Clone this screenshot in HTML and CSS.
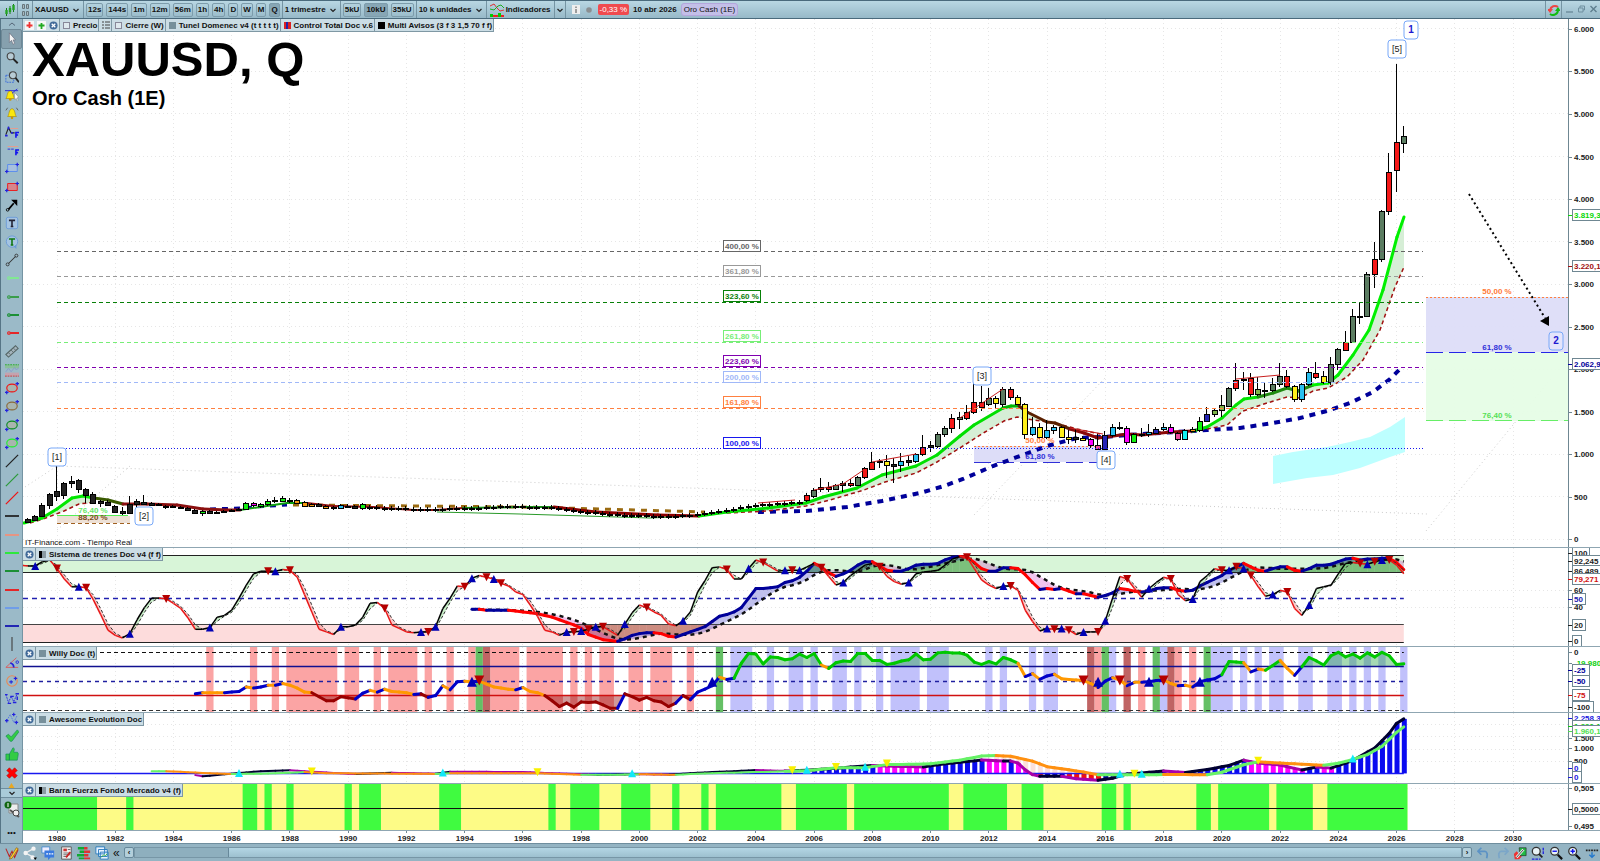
FILE: index.html
```html
<!DOCTYPE html>
<html lang="es">
  <head>
    <meta charset="UTF-8" />
    <meta name="viewport" content="width=device-width, initial-scale=1.0" />
    <title>XAUUSD, Q</title>
    <link rel="stylesheet" href="styles.css">
  </head>
  <body>
    <!-- shared shapes -->
    <svg class="defs" aria-hidden="true">
      <symbol id="chevron" viewBox="0 0 8 8"><path d="M1.500 3l2.500 2.500L6.500 3" fill="none" stroke="#222" stroke-width="1.200"/></symbol>
      <symbol id="close" viewBox="0 0 10 10"><circle cx="5" cy="5" r="4.500" fill="#416a98"/><path d="M3 3l4 4M7 3l-4 4" stroke="#fff" stroke-width="1.400"/></symbol>
      <symbol id="line" viewBox="0 0 16 16"><path d="M0 8h16" stroke="currentColor" stroke-width="2"/></symbol>
      <symbol id="diagonal" viewBox="0 0 16 16"><path d="M1 15L15 1" stroke="currentColor" stroke-width="1.500"/></symbol>
      <symbol id="ray" viewBox="0 0 16 16"><path d="M6 8h10" stroke="currentColor" stroke-width="2"/><circle cx="4.500" cy="8" r="1.500" fill="none" stroke="currentColor" stroke-width="1.200"/></symbol>
      <symbol id="ellipse" viewBox="0 0 16 16"><ellipse cx="8" cy="8" rx="6" ry="4.500" fill="#a9b5ae" stroke="currentColor" stroke-width="1.300"/><path d="M0 13h4M2 11v4M12 3h4M14 1v4" stroke="#22d" stroke-width="1.400"/></symbol>
      <symbol id="glass" viewBox="0 0 16 16"><circle cx="6.500" cy="6" r="4" fill="#b7cbd4" stroke="#444" stroke-width="1.300"/><path d="M9.500 9l5 5" stroke="#222" stroke-width="2.200"/></symbol>
    </svg>

    <header class="topbar">
      <button class="tool" aria-label="Tipo de gráfico"><svg width="10" height="12" viewBox="0 0 10 12"><path d="M1.500 4v8M5 2v8M8.500 0v8" stroke="#167a16"/><path d="M1.500 6v4M5 4v4M8.500 1v5" stroke="#24a424" stroke-width="2.400"/></svg></button>
      <button class="tool" aria-label="Vincular"><svg width="7" height="12" viewBox="0 0 7 12"><path d="M.5.5h2v4h-2zM4.500.5h2v4h-2zM.5 7.500h2v4h-2zM4.500 7.500h2v4h-2z" fill="#a9b9bf" stroke="#66767c"/></svg></button>
      <label class="dropdown"><select aria-label="Símbolo"><option>XAUUSD</option></select><svg width="8" height="8"><use href="#chevron"/></svg></label>
      <div class="group">
        <button>12s</button>
        <button>144s</button>
        <button>1m</button>
        <button>12m</button>
        <button>56m</button>
        <button>1h</button>
        <button>4h</button>
        <button>D</button>
        <button>W</button>
        <button>M</button>
        <button class="active">Q</button>
      </div>
      <label class="dropdown"><select aria-label="Periodo"><option>1 trimestre</option></select><svg width="8" height="8"><use href="#chevron"/></svg></label>
      <div class="group">
        <button>5kU</button>
        <button class="active">10kU</button>
        <button>35kU</button>
      </div>
      <label class="dropdown"><select aria-label="Unidades"><option>10 k unidades</option></select><svg width="8" height="8"><use href="#chevron"/></svg></label>
      <button class="tool indicators"><svg width="14" height="14" viewBox="0 0 14 14"><path d="M0 3l4-2 3 4 3 3 4-1" fill="none" stroke="#d33"/><path d="M0 6l4 1 4-4 3-1 3 3" fill="none" stroke="#2a2"/><path d="M0 11h3v3H0zM8 10h3v4H8z" fill="#0c0"/><path d="M3 12h5v2H3zM11 12h3v2h-3z" fill="#e22"/></svg>Indicadores</button>
      <button class="tool more" aria-label="Más indicadores"><svg width="8" height="8"><use href="#chevron"/></svg></button>
      <div class="status">
        <svg width="8" height="9" viewBox="0 0 8 9"><path d="M0 0h8v9H0z" fill="#eee"/><path d="M4 1.500v1.500M4 4v4" stroke="#888" stroke-width="1.600"/></svg>
        <svg width="6" height="6" viewBox="0 0 6 6"><circle cx="3" cy="3" r="2.800" fill="#8a8f92"/></svg>
        <span class="change">-0,33 %</span>
        <b>10 abr 2026</b>
        <span class="chip">Oro Cash (1E)</span>
      </div>
      <button class="tool refresh" aria-label="Actualizar"><svg width="12" height="12" viewBox="0 0 12 12"><path d="M10 3A5 5 0 0 0 2 6" fill="none" stroke="#e44" stroke-width="2"/><path d="M-1 5h6L2 9z" fill="#e44"/><path d="M2 10a5 5 0 0 0 8-4" fill="none" stroke="#1b1" stroke-width="2"/><path d="M7 7h6L10 3z" fill="#1b1"/></svg></button>
      <div class="window">
        <button aria-label="Minimizar"><svg width="7" height="8" viewBox="0 0 7 8"><path d="M0 7h7" stroke="#6f8f9f" stroke-width="1.500"/></svg></button>
        <button aria-label="Restaurar"><svg width="7" height="8" viewBox="0 0 7 8"><path d="M2 3V1h4.500v4H5M.5 3H5v4H.5z" fill="none" stroke="#6f8f9f"/></svg></button>
        <button aria-label="Cerrar"><svg width="7" height="8" viewBox="0 0 7 8"><path d="M.5 1l6 6M6.500 1l-6 6" stroke="#5f7f8f" stroke-width="1.400"/></svg></button>
      </div>
    </header>

    <div class="workspace">
      <nav class="sidebar" aria-label="Herramientas de dibujo">
        <button class="scroll" aria-label="Subir"><svg width="6" height="4" viewBox="0 0 6 4"><path d="M0 3.500L3 1l3 2.500" fill="none" stroke="#567"/></svg></button>
        <div class="tools">
          <button class="active" aria-label="Cursor"><svg viewBox="0 0 16 16"><path d="M5 1v11l2.500-2.500L9 14l2-1-1.700-4H12z" fill="#f4f4f4" stroke="#667" stroke-width=".7"/></svg></button>
          <button aria-label="Lupa"><svg><use href="#glass"/></svg></button>
          <button aria-label="Zoom de zona"><svg viewBox="0 0 16 16"><path d="M1 6h6M1 6v8h9v-3" fill="none" stroke="#36d" stroke-dasharray="2 1"/><circle cx="9" cy="6" r="4" fill="#b7cbd4" stroke="#444" stroke-width="1.200"/><path d="M12 9l4 5" stroke="#222" stroke-width="2"/></svg></button>
          <button aria-label="Alerta en objeto"><svg viewBox="0 0 16 16"><path d="M1 12c2-2 1-8 5-9 4 1 3 7 5 9z" fill="#fbe80c" stroke="#a80" stroke-width=".7"/><circle cx="6" cy="13" r="1.500" fill="#c90"/><path d="M0 3h15M8 6l6-5" stroke="#22d"/><path d="M11 5v8l2-1 1 3 1-1-1-3h2z" fill="#fff" stroke="#777" stroke-width=".5"/></svg></button>
          <button aria-label="Alerta"><svg viewBox="0 0 16 16"><path d="M3 12c2-2 1-8 5-9 4 1 3 7 5 9z" fill="#fbe80c" stroke="#a80" stroke-width=".7"/><circle cx="8" cy="13.500" r="1.500" fill="#c90"/><path d="M3 2L1 5M13 2l2 3" stroke="#555"/></svg></button>
          <button aria-label="Onda"><svg viewBox="0 0 16 16"><path d="M1 11l3-8 3 6h4" fill="none" stroke="#222" stroke-width="1.300"/><path d="M0 12h3M4 2v3M7 9h2" stroke="#22d" stroke-width="2"/><path d="M6 4h9" stroke="#e98"/><path d="M12.500 14.500V8.500H16M12.500 11.500H15" fill="none" stroke="#11e" stroke-width="1.800"/></svg></button>
          <button aria-label="Fibonacci"><svg viewBox="0 0 16 16"><path d="M3 4h12" stroke="#e98"/><path d="M3 7h8" stroke="#22d" stroke-dasharray="3 1"/><path d="M12.500 14V8H16M12.500 11H15" fill="none" stroke="#11e" stroke-width="1.800"/></svg></button>
          <button aria-label="Rectángulo azul"><svg viewBox="0 0 16 16"><path d="M3 4h11v8H3z" fill="#a8c0dd" stroke="#58e"/><path d="M0 12h4M2 10v4M12 4h4M14 2v4" stroke="#22d" stroke-width="1.400"/></svg></button>
          <button aria-label="Rectángulo rojo"><svg viewBox="0 0 16 16"><path d="M3 4h11v8H3z" fill="#d7868c" stroke="#e11"/><path d="M0 12h4M2 10v4M12 4h4M14 2v4" stroke="#22d" stroke-width="1.400"/></svg></button>
          <button aria-label="Flecha"><svg viewBox="0 0 16 16"><path d="M4 13l6-7" stroke="#000" stroke-width="2"/><path d="M7 2h7v7z"/><circle cx="3" cy="13.500" r="1.500" fill="none" stroke="#000"/></svg></button>
          <button aria-label="Texto"><svg viewBox="0 0 16 16"><rect x="1.500" y="1.500" width="13" height="13" rx="2" fill="#a5c4e2" stroke="#6a9ad8"/><path d="M4.500 5h7M8 5v7M6.500 12h3" stroke="#223" stroke-width="1.800"/></svg></button>
          <button aria-label="Globo"><svg viewBox="0 0 16 16"><circle cx="8" cy="7.500" r="6.500" fill="#a5c4e2" stroke="#6a9ad8"/><path d="M10 13l3 3v-5" fill="#6a9ad8"/><path d="M4.500 4.500h7M8 4.500v7M6.500 11.500h3" stroke="#171" stroke-width="1.800"/></svg></button>
          <button aria-label="Segmento"><svg viewBox="0 0 16 16"><path d="M4 12l8-8" stroke="#333" stroke-width="1.200"/><circle cx="3" cy="13" r="1.700" fill="none" stroke="#333"/><circle cx="13" cy="3" r="1.700" fill="none" stroke="#333"/></svg></button>
          <button class="mint" aria-label="Semirrecta 1"><svg><use href="#ray"/></svg></button>
          <button class="leaf" aria-label="Semirrecta 2"><svg><use href="#ray"/></svg></button>
          <button class="green" aria-label="Semirrecta 3"><svg><use href="#ray"/></svg></button>
          <button class="red" aria-label="Semirrecta 4"><svg><use href="#ray"/></svg></button>
          <button aria-label="Regla"><svg viewBox="0 0 16 16"><path d="M1 12l11-10 3 3L4 15z" fill="#a4b4bd" stroke="#566" stroke-width="1.200"/><path d="M4 10l2 2M7 7l2 2M10 5l2 2" stroke="#566"/></svg></button>
          <button aria-label="Canal"><svg viewBox="0 0 16 16"><path d="M0 2h16v4H0z" fill="#8bbf9b"/><path d="M0 11h16v4H0z" fill="#c5a2ae"/><path d="M1 10l3-4 3 4 4-5 2 3 3-3" fill="none" stroke="#89c"/><path d="M0 2h16" stroke="#2a2" stroke-dasharray="2 1"/><path d="M0 15h16" stroke="#c33" stroke-dasharray="2 1"/></svg></button>
          <button class="red" aria-label="Elipse roja"><svg><use href="#ellipse"/></svg></button>
          <button class="brown" aria-label="Elipse marrón"><svg><use href="#ellipse"/></svg></button>
          <button class="green" aria-label="Elipse verde"><svg><use href="#ellipse"/></svg></button>
          <button class="lime" aria-label="Elipse lima"><svg><use href="#ellipse"/></svg></button>
          <button class="dark" aria-label="Recta negra"><svg><use href="#diagonal"/></svg></button>
          <button class="leaf" aria-label="Recta verde"><svg><use href="#diagonal"/></svg></button>
          <button class="red" aria-label="Recta roja"><svg><use href="#diagonal"/></svg></button>
          <button class="dark" aria-label="Horizontal negra"><svg><use href="#line"/></svg></button>
          <button class="salmon" aria-label="Horizontal salmón"><svg><use href="#line"/></svg></button>
          <button class="lime" aria-label="Horizontal lima"><svg><use href="#line"/></svg></button>
          <button class="green" aria-label="Horizontal verde"><svg><use href="#line"/></svg></button>
          <button class="red" aria-label="Horizontal roja"><svg><use href="#line"/></svg></button>
          <button class="sky" aria-label="Horizontal celeste"><svg><use href="#line"/></svg></button>
          <button class="navy" aria-label="Horizontal azul"><svg><use href="#line"/></svg></button>
          <button aria-label="Vertical"><svg viewBox="0 0 16 16"><path d="M8 0v16" stroke="#444" stroke-width="1.300"/></svg></button>
          <button aria-label="Ángulo"><svg viewBox="0 0 16 16"><path d="M13 2L1 13h14" fill="none" stroke="#d55"/><path d="M6 8q4 1 4 5" fill="none" stroke="#22d" stroke-width="2"/><circle cx="14" cy="7" r="1.500" fill="none" stroke="#22d"/></svg></button>
          <button aria-label="Círculo"><svg viewBox="0 0 16 16"><circle cx="8" cy="8" r="6" fill="none" stroke="#e98a55" stroke-width="1.300"/><path d="M5 9h4M7 7v4M10 5h4M12 3v4" stroke="#22d" stroke-width="1.200"/></svg></button>
          <button aria-label="Ondas 1-5"><svg viewBox="0 0 16 16"><path d="M1 3l3 9 3-7 3 6 4-9" fill="none" stroke="#22d" stroke-dasharray="2 1"/><path d="M0 3h3M3 13h4M6 5h4M9 12h4M12 2h4M14 5v4" stroke="#22d" stroke-width="1.600"/></svg></button>
          <button aria-label="Ondas abc"><svg viewBox="0 0 16 16"><path d="M2 11l4-7 4 9 4-8" fill="none" stroke="#57d" stroke-dasharray="2 1"/><path d="M0 11h4M2 9v4M8 4h4M10 2v4M11 13h4M13 11v4" stroke="#22d" stroke-width="1.400"/></svg></button>
          <button aria-label="Aceptar"><svg viewBox="0 0 16 16"><path d="M1 8l3-2 3 3 7-8 2 2-8 11H6z" fill="#3c4" stroke="#185" stroke-width=".7"/></svg></button>
          <button aria-label="Me gusta"><svg viewBox="0 0 16 16"><path d="M1 8h4v7H1zM5 8l4-7c3 0 1 4 1 5h4c2 1 1 3 0 9H5z" fill="#3c4" stroke="#185" stroke-width=".7"/></svg></button>
          <button aria-label="Borrar"><svg viewBox="0 0 16 16"><path d="M2 5l3-3 3 3 3-3 3 3-3 3 3 3-3 3-3-3-3 3-3-3 3-3z" fill="#f00" stroke="#a00" stroke-width=".6"/></svg></button>
        </div>
        <svg class="peek" viewBox="0 0 16 6" aria-hidden="true"><path d="M8 1l3 5H5z" fill="#e9a820"/></svg>
        <button class="scroll down" aria-label="Bajar"><svg width="8" height="8"><use href="#chevron"/></svg></button>
        <button class="big" aria-label="Configurar"><svg viewBox="0 0 16 18"><path d="M5 3h9v9H5z" fill="#eee" stroke="#888"/><circle cx="4" cy="4" r="3.500" fill="#161"/><path d="M4 2v4" stroke="#fff"/><path d="M6 9l4 3 5 4" stroke="#555" stroke-width="2"/><circle cx="12" cy="12" r="3" fill="#eee" stroke="#444"/></svg></button>
        <button class="big dots" aria-label="Más">•••</button>
      </nav>

      <main class="charts">
        <section class="pane">
          <svg class="plot" id="price"></svg>
          <div class="legend">
            <button aria-label="Quitar"><svg width="9" height="9" viewBox="0 0 9 9"><path d="M0 0h9v9H0z" fill="#f6f6f6"/><path d="M4.500 1v6M1.500 4.500h6" stroke="#e33" stroke-width="1.800"/></svg></button>
            <button aria-label="Añadir"><svg width="9" height="9" viewBox="0 0 9 9"><path d="M0 0h9v9H0z" fill="#f6f6f6"/><path d="M4.500 2v6M1.500 4.500h6" stroke="#2a2" stroke-width="1.800"/></svg></button>
            <button aria-label="Cerrar"><svg width="9" height="9"><use href="#close"/></svg></button>
            <button class="entry"><i class="swatch hollow"></i>Precio</button>
            <button class="entry" aria-label="Lista"><svg width="8" height="8" viewBox="0 0 8 8"><path d="M0 1h2M3 1h5M0 4h2M3 4h5M0 7h2M3 7h5" stroke="#444"/></svg></button>
            <button class="entry"><i class="swatch hollow"></i>Cierre (W)</button>
            <button class="entry"><i class="swatch"></i>Tunel Domenec v4 (t t t t t)</button>
            <button class="entry"><i class="swatch striped"></i>Control Total Doc v.6</button>
            <button class="entry"><i class="swatch black"></i>Multi Avisos (3 f 3 1,5 70 f f)</button>
          </div>
          <div class="heading">
            <h1>XAUUSD, Q</h1>
            <h2>Oro Cash (1E)</h2>
          </div>
          <p class="source">IT-Finance.com - Tiempo Real</p>
        </section>
        <section class="pane">
          <svg class="plot" id="trains"></svg>
          <div class="legend"><button aria-label="Cerrar"><svg width="9" height="9"><use href="#close"/></svg></button><button class="entry"><i class="swatch half"></i>Sistema de trenes Doc v4 (f f)</button></div>
        </section>
        <section class="pane">
          <svg class="plot" id="willy"></svg>
          <div class="legend"><button aria-label="Cerrar"><svg width="9" height="9"><use href="#close"/></svg></button><button class="entry"><i class="swatch"></i>Willy Doc (t)</button></div>
        </section>
        <section class="pane">
          <svg class="plot" id="awesome"></svg>
          <div class="legend"><button aria-label="Cerrar"><svg width="9" height="9"><use href="#close"/></svg></button><button class="entry"><i class="swatch"></i>Awesome Evolution Doc</button></div>
        </section>
        <section class="pane">
          <svg class="plot" id="force"></svg>
          <div class="legend"><button aria-label="Cerrar"><svg width="9" height="9"><use href="#close"/></svg></button><button class="entry"><i class="swatch half"></i>Barra Fuerza Fondo Mercado v4 (f)</button></div>
        </section>
        <div class="time"><svg class="plot" id="time"></svg></div>
      </main>
    </div>

    <footer class="bottombar">
      <div class="icons">
        <button aria-label="Dibujo"><svg viewBox="0 0 16 16"><path d="M1 3l4 9 3-6 3 7 4-9" fill="none" stroke="#b22" stroke-width="1.200"/><path d="M6 13l7-11 2 1-7 11-3 1z" fill="#fc3" stroke="#850" stroke-width=".7"/></svg></button>
        <button aria-label="Compartir"><svg viewBox="0 0 16 16"><path d="M12 3L3 8l9 5" fill="none" stroke="#eee" stroke-width="1.500"/><circle cx="12" cy="3" r="2.500" fill="#f4f4f4"/><circle cx="3" cy="8" r="2.500" fill="#f4f4f4"/><circle cx="11" cy="13" r="2.500" fill="#f4f4f4"/><path d="M12 13h4l-2 3z"/></svg></button>
        <button aria-label="Chat"><svg viewBox="0 0 16 16"><path d="M1 1h9v7H1z" fill="#eef" stroke="#48c"/><path d="M4 5h11v8h-4l-3 3v-3H4z" fill="#3a7be0"/><path d="M6 9h2M9 9h2M12 9h2" stroke="#fff" stroke-width="1.500"/></svg></button>
        <button aria-label="Noticias"><svg viewBox="0 0 16 16"><path d="M3 1h11v14H3z" fill="#eee" stroke="#555"/><path d="M5 3h4v3H5z" fill="#c33"/><path d="M10 4h3M5 8h8M5 10h8M5 12h5" stroke="#666"/><path d="M8 13l5-6" stroke="#c22" stroke-width="2"/></svg></button>
        <button aria-label="Órdenes"><svg viewBox="0 0 16 16"><path d="M1 1h7v3H1zM3 5h5v3H3zM0 9h8v3H0zM2 13h6v2H2z" fill="#1a3"/><path d="M8 1h4v3H8zM8 5h7v3H8zM8 9h5v3H8zM8 13h7v2H8z" fill="#d33"/></svg></button>
        <button aria-label="Ventanas"><svg viewBox="0 0 16 16"><path d="M1 1h10v8H1zM4 4h10v8H4zM6 7h9v8H6z" fill="#e8f2ff" stroke="#27b"/><path d="M7 13l3-3 2 1 2-2" fill="none" stroke="#2a2"/></svg></button>
        <button class="fold" aria-label="Plegar">«</button>
      </div>
      <button class="arrow" aria-label="Izquierda">‹</button>
      <div class="track"><div class="thumb"></div></div>
      <button class="arrow" aria-label="Derecha">›</button>
      <div class="icons right">
        <button aria-label="Deshacer"><svg viewBox="0 0 16 16"><path d="M5 2L1 6l4 4M2 6h7q4 1 2 8" fill="none" stroke="#5c92c4" stroke-width="2"/></svg></button>
        <button aria-label="Rehacer"><svg viewBox="0 0 16 16"><path d="M11 2l4 4-4 4M14 6H7q-4 1-2 8" fill="none" stroke="#7ba6c8" stroke-width="2"/></svg></button>
        <button aria-label="Ajustes"><svg viewBox="0 0 16 16"><path d="M1 9l3-3 6 6-3 3H2z" fill="#e33"/><path d="M7 2h8v9H8z" fill="#2b4" stroke="#222" stroke-width=".7"/><path d="M4 13l8-9" stroke="#eee" stroke-width="3"/><path d="M4 13l8-9" stroke="#333"/></svg></button>
        <button aria-label="Ajustar zoom"><svg viewBox="0 0 16 16"><circle cx="6" cy="6" r="4.500" fill="#e8f2f6" stroke="#333" stroke-width="1.500"/><path d="M9 9l4 4" stroke="#222" stroke-width="2"/><path d="M14 2v8M1 15h10" stroke="#22d" stroke-width="1.500" stroke-dasharray="3 1"/></svg></button>
        <button aria-label="Alejar"><svg viewBox="0 0 16 16"><circle cx="6.500" cy="6" r="4.500" fill="#e8f2f6" stroke="#333" stroke-width="1.500"/><path d="M10 10l5 5" stroke="#111" stroke-width="2.500"/><path d="M4 6h5" stroke="#11e" stroke-width="1.600"/></svg></button>
        <button aria-label="Acercar"><svg viewBox="0 0 16 16"><circle cx="6.500" cy="6" r="4.500" fill="#e8f2f6" stroke="#333" stroke-width="1.500"/><path d="M10 10l5 5" stroke="#111" stroke-width="2.500"/><path d="M4 6h5M6.500 3.500v5" stroke="#11e" stroke-width="1.600"/></svg></button>
        <button aria-label="Más"><svg viewBox="0 0 16 16"><path d="M1 5h14" stroke="#222" stroke-width="2" stroke-dasharray="2 1"/><path d="M8 7v5M5 10l3 3 3-3" fill="none" stroke="#27c" stroke-width="1.600"/></svg></button>
      </div>
    </footer>

    <script src="charts.js"></script>
  </body>
</html>
```

FILE: styles.css
```css
* {
  box-sizing: border-box;
}

body {
  margin: 0;
  height: 100vh;
  display: flex;
  flex-direction: column;
  overflow: hidden;
  background: #9bbac8;
  color: #111;
  font-family: "Liberation Sans", Arial, sans-serif;
  font-size: 8px;
}

button,
select {
  margin: 0;
  padding: 0;
  border: none;
  background: none;
  color: inherit;
  font: inherit;
  cursor: pointer;
}

.defs {
  position: absolute;
  width: 0;
  height: 0;
}

/* top bar */
.topbar {
  flex: none;
  display: flex;
  align-items: stretch;
  height: 19px;
  border-top: 1px solid #4a6a7c;
  border-bottom: 1px solid #4a6a7c;
  background: linear-gradient(#b9d7e3, #97b9c8);
  font-weight: bold;
}

.tool,
.dropdown,
.group {
  display: flex;
  align-items: center;
  border-right: 1px solid #7594a3;
}

.tool {
  justify-content: center;
  width: 15px;
}

.topbar .tool:first-child {
  width: 18px;
  padding-left: 2px;
}

.tool.indicators {
  width: auto;
  gap: 2px;
  padding: 0 3px;
}

.tool.more {
  width: 11px;
}

.dropdown {
  gap: 3px;
  padding: 0 3px 0 2px;
}

.dropdown select {
  appearance: none;
  font-weight: bold;
}

.group {
  gap: 3px;
  padding: 0 2px;
}

.group button {
  height: 14px;
  padding: 0 1px;
  border: 1px solid #7d9cab;
  border-radius: 2px;
}

.group .active {
  background: #87a6b5;
}

.status {
  flex: 1;
  display: flex;
  align-items: center;
  gap: 4px;
  padding-left: 6px;
}

.status svg {
  margin-right: 2px;
}

.change {
  padding: 1px 2px;
  border-radius: 2px;
  background: #f04a4f;
  color: #fff;
  font-weight: normal;
}

.chip {
  padding: 1px 2px;
  border: 1px solid #b4a6dc;
  border-radius: 3px;
  background: #c3bfe8;
  font-weight: normal;
}

.refresh {
  width: 17px;
  border-left: 1px solid #7594a3;
}

.window {
  display: flex;
  align-items: center;
  gap: 5px;
  padding: 0 3px 0 4px;
}

.window button {
  height: 10px;
}

/* drawing tools */
.workspace {
  flex: 1;
  display: flex;
  min-height: 0;
}

.sidebar {
  flex: none;
  display: flex;
  flex-direction: column;
  width: 23px;
  border-left: 1px solid #567586;
  border-right: 1px solid #7594a3;
  background: #9bbac8;
}

.sidebar button {
  display: flex;
  align-items: center;
  justify-content: center;
}

.tools {
  flex: 1;
  display: flex;
  flex-direction: column;
  min-height: 0;
}

.tools button {
  flex: 1;
  min-height: 0;
  border-radius: 2px;
}

.tools button.active {
  background: #86a0ae;
  border: 1px solid #6e8896;
}

.tools svg {
  width: 14px;
  height: 14px;
}

.scroll {
  height: 10px;
}

.scroll.down {
  height: 10px;
  border-top: 1px solid #6e8e9e;
  border-bottom: 1px solid #6e8e9e;
  background: #a9cbd9;
}

.peek {
  height: 6px;
}

.big {
  height: 24px;
}

.big svg {
  width: 16px;
  height: 18px;
}

.big.dots {
  height: 21px;
}

.mint { color: #7ef08a; }
.leaf { color: #2c9a3a; }
.green { color: #0a8a20; }
.lime { color: #1fef2a; }
.red { color: #f01212; }
.brown { color: #8a6a3a; }
.dark { color: #222; }
.salmon { color: #f2917a; }
.sky { color: #6a9aee; }
.navy { color: #1212b0; }

/* chart panes, heights shared out in proportion */
.charts {
  flex: 1;
  display: grid;
  grid-template-rows:
    minmax(0, 529fr) minmax(0, 99fr) minmax(0, 66fr)
    minmax(0, 71fr) minmax(0, 47fr) 12px;
  min-width: 0;
  background: #fff;
}

.pane {
  position: relative;
  border-bottom: 1px solid #8fa6b2;
}

.plot {
  display: block;
  width: 100%;
  height: 100%;
}

.plot text {
  font-size: 8px;
  font-weight: bold;
}

.plot .wave {
  font-size: 9px;
  font-weight: normal;
}

.plot .wave-main {
  font-size: 10px;
  font-weight: bold;
}

.legend {
  position: absolute;
  top: 0;
  left: 0;
  display: flex;
  height: 13px;
  background: #cbdde5;
  border-right: 1px solid #7f98a4;
  border-bottom: 1px solid #7f98a4;
}

.legend button {
  display: flex;
  align-items: center;
  padding: 0 1px 0 2px;
  font-weight: bold;
  white-space: nowrap;
}

.legend .entry {
  gap: 3px;
  padding: 0 1px 0 3px;
  border-left: 1px solid #7f98a4;
}

.swatch {
  width: 7px;
  height: 7px;
  background: #77909b;
}

.swatch.hollow {
  border: 1px solid #889;
  background: #dfe9ee;
}

.swatch.black {
  background: #000;
}

.swatch.half {
  background: linear-gradient(90deg, #000 50%, #8a9aa2 50%);
}

.swatch.striped {
  background: linear-gradient(90deg, #d22 30%, #22a 30% 60%, #d22 60%);
}

.heading {
  position: absolute;
  top: 13px;
  left: 9px;
  color: #000;
}

.heading h1,
.heading h2 {
  margin: 0;
}

.heading h1 {
  font-size: 49px;
  line-height: 54px;
}

.heading h2 {
  font-size: 20px;
  line-height: 24px;
}

.source {
  position: absolute;
  left: 2px;
  bottom: 0;
  margin: 0;
}

/* bottom bar */
.bottombar {
  flex: none;
  display: flex;
  align-items: center;
  height: 18px;
  border-top: 1px solid #6f8e9e;
  background: #94b4c3;
}

.icons {
  display: flex;
  align-items: center;
  gap: 4px;
  width: 124px;
  padding-left: 5px;
}

.icons.right {
  width: 128px;
  padding-left: 5px;
}

.icons button {
  flex: none;
  display: flex;
}

.icons svg {
  width: 14px;
  height: 14px;
}

.icons .fold {
  font-size: 12px;
}

.arrow {
  width: 10px;
  height: 11px;
  border: 1px solid #67889a;
  border-radius: 2px;
  background: #b3cfdb;
  line-height: 8px;
  font-weight: bold;
}

.track {
  flex: 1;
  height: 11px;
  border: 1px solid #7796a6;
  background: #8eafbe;
}

.thumb {
  height: 100%;
  margin-left: 7%;
  border-left: 1px solid #67889a;
  background: linear-gradient(#b4d6e4, #9dc0cf);
}
```

FILE: charts.js
```js
// Chart units: the plot area is 1545 wide and starts at x = 23,
// every pane gives its own top and height. Quarter 0 is the first of 1980.
const AXIS = 32;
const QUARTER = 7.28;
const NAVY = "#00009a";
const UP = "#0000b4";
const DOWN = "#b40000";

function openPane(id, top, height) {
  const svg = document.getElementById(id);
  svg.innerHTML = "";
  const W = svg.clientWidth;
  const H = svg.clientHeight;
  const sx = (W - AXIS) / 1545;
  const sy = H / height;
  const p = {
    W, H, sx,
    x: (u) => (u - 23) * sx,
    q: (i) => (57 + i * QUARTER - 23) * sx,
    y: (u) => (u - top) * sy,
  };
  p.add = (tag, attrs, text) => {
    const node = document.createElementNS("http://www.w3.org/2000/svg", tag);
    for (const k in attrs) node.setAttribute(k, attrs[k]);
    if (text !== undefined) node.textContent = text;
    svg.appendChild(node);
    return node;
  };
  p.line = (x1, y1, x2, y2, stroke, width = 1, dash = "") => {
    // keep level and upright hairlines sharp
    if (y1 === y2) y1 = y2 = Math.floor(y1) + 0.5;
    if (x1 === x2) x1 = x2 = Math.floor(x1) + 0.5;
    return p.add("line", { x1, y1, x2, y2, stroke, "stroke-width": width, "stroke-dasharray": dash });
  };
  p.path = (pts, stroke, width = 1, dash = "") =>
    p.add("polyline", { points: pts.map((a) => a.join()).join(" "), fill: "none", stroke, "stroke-width": width, "stroke-dasharray": dash });
  p.area = (pts, fill, opacity = 1) =>
    p.add("polygon", { points: pts.map((a) => a.join()).join(" "), fill, "fill-opacity": opacity });
  p.rect = (x, y, width, height, fill, stroke = "none") =>
    p.add("rect", { x, y, width: Math.max(width, 0), height: Math.max(height, 0), fill, stroke });
  p.map = (pts) => pts.map(([a, b]) => [p.x(a), p.y(b)]);
  return p;
}

function grid(p, levels) {
  for (let i = 0; i <= 200; i += 8) p.line(p.q(i), 0, p.q(i), p.H, "#e6e6e6", 1, "1 3");
  levels.forEach((l) => p.line(0, p.y(l), p.W - AXIS, p.y(l), "#e6e6e6", 1, "1 3"));
}

function axis(p, ticks) {
  p.rect(p.W - AXIS, 0, AXIS, p.H, "#fff");
  p.line(p.W - AXIS, 0, p.W - AXIS, p.H, "#6f8792");
  ticks.forEach(([y, label, color = "#222", boxed]) => {
    const ty = Math.round(p.y(y));
    p.line(p.W - AXIS, ty, p.W - AXIS + 4, ty, boxed ? color : "#6f8792");
    if (boxed) p.rect(p.W - AXIS + 4.5, ty - 5.5, label.length > 4 ? 40 : label.length * 4 + 5, 11, "#fff", "#6f8792");
    p.add("text", { x: p.W - AXIS + 6, y: ty + 3, fill: color }, label);
  });
}

function triangle(p, i, y, up, color, r = 4) {
  const x = p.q(i);
  const s = up ? 1 : -1;
  p.area([[x - r, y + r * s], [x + r, y + r * s], [x, y - r * s]], color);
}

// linear interpolation between [quarter, value] knots
function spread(knots) {
  const out = {};
  for (let k = 1; k < knots.length; k++) {
    const [a, va] = knots[k - 1];
    const [b, vb] = knots[k];
    for (let i = Math.ceil(a); i <= b; i++) out[i] = va + ((vb - va) * (i - a)) / (b - a);
  }
  return out;
}

const candleColors = {
  k: "#222", g: "#5b7c61", r: "#f51818", y: "#fff01a", c: "#2ac0f0", n: "#2424b4",
  o: "#7db54a", m: "#ff00ff", l: "#12f012", p: "#ee4a9c", a: "#f59a10", t: "#10f0f0",
};

// colour, body top, body bottom, high, low
const earlyCandles = `k 519 522 518 523|k 516 520 515 521|k 505 516 503 517|k 494 505 493 509|k 491 496 463 501|k 483 495 482 499|k 481 483 476 488|k 480 489 479 493|k 489 495 488 503|k 494 503 492 504|k 501 503 500 507|k 502 505 500 506|k 506 512 505 513|k 511 513 507 515|k 504 513 496 514|k 501 504 499 507|k 502 504 495 505|k 503 505 502 506|k 504 505 503 506|k 506 507 505 509|k 506 507 505 508|k 507 508 506 509|k 508 510 507 511|k 510 513 509 514|l 511 513 510 516|k 511 513 510 514|k 512 513 511 514|k 511 512 510 513|k 510 511 509 512|k 509 510 508 511|l 503 509 502 510|m 503 505 502 507|l 504 506 503 508|l 501 504 499 506|k 500 501 497 503|l 498 501 496 502|a 500 501 498 503|a 500 503 499 504|a 502 506 501 507|a 504 506 503 507|k 504 506 503 507|a 506 508 505 509|a 507 508 506 510|c 505 508 504 509|a 506 507 504 508|k 506 508 505 509|l 504 508 503 510`.split("|");

const lateCandles = `r 495 500 493 502|g 490 496 488 498|r 487 489 478 492|r 487 489 482 492|g 485 489 484 490|k 483 485 481 492|r 483 485 479 487|g 477 485 476 486|r 468 477 467 479|r 462 469 452 470|k 461 462 459 468|y 461 465 455 478|k 464 466 458 483|c 461 465 453 472|k 460 462 456 466|c 454 461 453 463|r 447 454 435 456|k 445 447 441 452|g 434 446 432 448|g 428 434 426 437|r 418 428 414 433|g 417 419 412 429|r 412 418 405 420|r 402 412 376 414|r 402 407 386 411|g 398 404 388 406|y 398 403 396 409|g 389 404 387 407|r 389 397 387 400|y 397 404 395 405|y 404 434 403 439|c 427 434 417 436|y 427 437 423 439|c 430 437 420 439|c 427 430 425 434|y 427 437 426 438|y 437 439 430 444|k 437 439 429 443|y 438 440 436 441|m 439 445 438 448|p 445 449 434 450|n 435 449 431 450|c 427 435 424 437|k 427 428 422 430|m 428 442 426 445|l 434 442 433 443|k 434 435 428 437|c 432 434 424 437|n 429 433 427 434|c 427 429 423 431|m 427 432 424 434|p 433 439 432 441|t 430 439 429 440|a 429 431 427 432|l 421 430 417 432|n 414 421 407 422|o 410 414 409 417|o 405 410 395 417|g 388 406 387 407|r 380 388 363 391|k 379 380 372 390|r 378 394 373 397|o 389 394 377 396|k 390 391 383 398|g 384 390 378 392|g 376 384 363 387|r 376 386 370 388|y 386 399 385 402|c 384 399 383 402|c 372 384 368 386|r 373 377 362 379|y 376 382 371 384|g 364 382 357 385|g 349 364 348 370|r 342 350 331 351|g 316 342 309 343|g 316 317 302 324|g 274 316 272 317|r 259 274 242 288|g 211 259 210 262|r 172 211 153 215|r 142 170 64 192|g 136 143 126 153`.split("|");

function drawCandles(p, list, start) {
  list.forEach((row, k) => {
    const [c, top, bottom, high, low] = row.split(" ");
    const x = Math.round(p.q(start + k)) - 0.5;
    p.line(x, p.y(high), x, p.y(low), "#000");
    p.rect(x - 2, Math.round(p.y(top)) + 0.5, 5, Math.max(Math.round(p.y(bottom) - p.y(top)), 1), candleColors[c], "#000");
  });
}

const fibs = [
  [251.5, "400,00 %", "#666", "4 3"],
  [276.5, "361,80 %", "#999", "4 3"],
  [302, "323,60 %", "#088008", "4 3"],
  [342, "261,80 %", "#77ee77", "4 3"],
  [367, "223,60 %", "#8000b0", "4 3"],
  [382.5, "200,00 %", "#a0b8f8", "4 3"],
  [408, "161,80 %", "#ff8040", "4 3"],
  [448.5, "100,00 %", "#1818ee", "1 2"],
];

const fast = [[24, 523], [42, 518], [57, 509], [72, 498], [83, 496], [94, 498], [108, 500], [123, 504], [147, 504], [177, 505], [203, 509], [227, 510], [240, 510], [260, 507], [287, 503], [307, 503], [333, 506], [373, 507], [413, 510], [437, 510], [463, 508], [520, 507], [554, 507], [596, 512], [658, 515], [699, 516], [727, 512], [768, 508], [806, 503], [823, 497], [857, 488], [882, 475], [916, 466], [937, 455], [960, 436], [974, 425], [1003, 408], [1011, 406], [1019, 406], [1027, 412], [1047, 422], [1055, 423], [1070, 429], [1084, 433], [1098, 438], [1107, 437], [1127, 434], [1142, 435], [1171, 432], [1193, 431], [1207, 427], [1222, 418], [1236, 405], [1244, 399], [1258, 397], [1273, 393], [1287, 388], [1298, 391], [1313, 385], [1328, 383], [1338, 375], [1353, 355], [1369, 330], [1383, 290], [1397, 237], [1404, 217]];
const slowEarly = [[30, 523], [43, 519], [64, 511], [79, 504], [96, 502]];
const slowMid = [[727, 513], [768, 511], [806, 506], [830, 500], [864, 490], [885, 482], [916, 473], [937, 462], [963, 446], [985, 432], [1004, 421], [1017, 417], [1027, 419], [1055, 423], [1077, 429], [1100, 434]];
const slowLate = [[1193, 431], [1207, 429], [1227, 425], [1243, 411], [1267, 403], [1287, 397], [1300, 398], [1313, 391], [1328, 388], [1347, 377], [1363, 360], [1380, 330], [1395, 287], [1404, 267]];
const tunnel = [[758, 512], [806, 511], [847, 507], [882, 501], [920, 493], [944, 486], [963, 479], [993, 466], [1020, 456], [1047, 446], [1077, 438], [1103, 437], [1142, 434], [1193, 431], [1207, 430], [1240, 428], [1273, 423], [1300, 418], [1327, 411], [1350, 403], [1373, 392], [1390, 379], [1402, 367]];

function fibZone(p, x1, x2, y1, y2, fill, opacity) {
  p.area([[x1, p.y(y1)], [x2, p.y(y1)], [x2, p.y(y2)], [x1, p.y(y2)]], fill, opacity);
}

function label(p, x, y, text, fill) {
  p.add("text", { x, y, fill, "text-anchor": "middle" }, text);
}

function wave(p, x, y, text, main) {
  const w = main ? 14 : 18;
  p.add("rect", { x: x - w / 2, y: y - 9, width: w, height: 18, rx: 3, fill: main && text === "2" ? "#e4e4fb" : "#fff", stroke: "#78a8f8" });
  p.add("text", { x, y: y + 3, class: main ? "wave wave-main" : "wave", fill: main ? "#2018d0" : "#222", "text-anchor": "middle" }, text);
}

function drawPrice() {
  const p = openPane("price", 19, 528);
  const levels = [];
  for (let v = 0; v <= 6000; v += 500) levels.push(539 - v * 0.085);
  grid(p, levels);

  p.area(p.map([[1273, 456], [1293, 452], [1327, 447], [1350, 442], [1370, 437], [1390, 427], [1405, 417], [1405, 452], [1390, 457], [1360, 468], [1333, 475], [1307, 478], [1273, 484]]), "#bdffff");

  // long construction lines
  [[[25, 487], [57, 466], [520, 482], [1057, 501], [1427, 514]], [[57, 530], [130, 466]], [[974, 515], [1105, 378]], [[1426, 531], [1568, 358]]].forEach((l) => p.path(p.map(l), "#ccc", 1, "1 3"));

  const right = p.W - AXIS;
  const left = p.x(1426);
  fibZone(p, left, right, 297, 352, "#ddddf8", 0.95);
  fibZone(p, left, right, 352, 421, "#e6fde6", 0.95);
  p.line(left, p.y(297), right, p.y(297), "#ff8040", 1, "2 2");
  p.line(left, p.y(352.5), right, p.y(352.5), "#2525e8", 1, "17 6");
  p.line(left, p.y(420.5), right, p.y(420.5), "#66ee66", 1, "17 6");
  label(p, p.x(1497), p.y(294), "50,00 %", "#ff7a38");
  label(p, p.x(1497), p.y(350), "61,80 %", "#3030d8");
  label(p, p.x(1497), p.y(418), "76,40 %", "#55e055");

  fibZone(p, p.x(974), p.x(1107), 446, 462, "#ddddf8", 1);
  p.line(p.x(974), p.y(446), p.x(1107), p.y(446), "#ff8040", 1, "2 2");
  p.line(p.x(974), p.y(462), p.x(1107), p.y(462), "#3030d8", 1, "17 6");
  fibZone(p, p.x(57), p.x(130), 516, 523, "#ede0d5", 1);
  p.line(p.x(57), p.y(515.5), p.x(128), p.y(515.5), "#5e5");
  p.line(p.x(57), p.y(523), p.x(130), p.y(523), "#a06020", 1, "4 3");

  // tunnel fills and averages
  const between = (a, b, from, to) => p.area(p.map(a.filter((d) => d[0] >= from && d[0] <= to).concat([...b].reverse())), "#d6eed6");
  between(fast, slowEarly, 24, 96);
  between(fast, slowMid, 727, 1055);
  between(fast, slowLate, 1193, 1404);
  p.path(p.map([[437, 512], [520, 514], [650, 518], [700, 516]]), "#2a9a2a");
  p.path(p.map([[293, 505], [420, 506], [520, 507], [600, 509], [705, 512]]), "#9a6a10", 3, "6 6");
  p.path(p.map([[210, 509], [240, 508], [287, 505]]), NAVY, 3, "6 6");
  p.path(p.map(tunnel), NAVY, 4, "6 6");
  [slowEarly, slowMid, slowLate].forEach((s) => p.path(p.map(s), "#a01010", 1.500, "4 3"));
  const trend = (x) => {
    if (x < 94) return "#00e800";
    if (x < 123) return "#3a5a00";
    if (x < 240) return "#8b1010";
    if (x < 307) return "#10a010";
    if (x < 440) return "#901010";
    if (x < 554) return "#188a18";
    if (x < 699) return "#8b0000";
    if (x < 980) return "#00e000";
    if (x < 1019) return "#00b400";
    if (x < 1070) return "#5a2000";
    if (x < 1193) return "#8b0808";
    if (x < 1258) return "#00e400";
    if (x < 1300) return "#208a10";
    return "#00f000";
  };
  for (let k = 1; k < fast.length; k++) {
    const flat = fast[k][0] > 240 && fast[k][0] < 560;
    p.add("polyline", { points: p.map([fast[k - 1], fast[k]]).join(" "), fill: "none", stroke: trend(fast[k - 1][0]), "stroke-width": flat ? 2 : 3, "stroke-linecap": "round" });
  }

  drawCandles(p, earlyCandles, -4);
  const quiet = spread([[43, 507], [50, 509], [57, 508], [62, 506], [68, 507], [72, 511], [78, 515], [85, 516], [88, 514], [92, 510], [94, 507], [97, 504], [102, 502]]);
  const tints = "kakkrkkckklkak";
  const filler = [];
  for (let i = 43; i <= 102; i++) {
    const y = Math.round(quiet[i]);
    filler.push([tints[i % tints.length], y, y + 1, y - 2, y + 3].join(" "));
  }
  drawCandles(p, filler, 43);
  drawCandles(p, lateCandles, 103);

  [[[758, 503], [795, 500]], [[814, 490], [843, 484], [865, 469]], [[872, 462], [916, 454]], [[960, 418], [1003, 389]], [[1236, 379], [1280, 375]], [[1070, 428], [1103, 434]]].forEach((l) => p.path(p.map(l), "#c82020"));

  fibs.forEach(([y, text, color, dash]) => {
    p.line(p.x(57), p.y(y), p.x(1423), p.y(y), color, 1, dash);
    const x = Math.round(p.x(723)) + 0.5;
    p.rect(x, Math.round(p.y(y - 12)) + 0.5, 37, 11, "#fff", color);
    p.add("text", { x: x + 18.5, y: Math.round(p.y(y - 12)) + 9, fill: color, "text-anchor": "middle" }, text);
  });
  label(p, p.x(1040), p.y(443), "50,00 %", "#ff8040");
  label(p, p.x(1040), p.y(459), "61,80 %", "#3030d8");
  label(p, p.x(93), p.y(513), "76,40 %", "#66e866");
  label(p, p.x(93), p.y(520), "88,20 %", "#7a4a18");

  p.path(p.map([[1469, 194], [1545, 318]]), "#000", 2, "2 3");
  p.area(p.map([[1540, 321], [1549, 316], [1549, 326]]), "#000");

  wave(p, p.x(57), p.y(457), "[1]");
  wave(p, p.x(144), p.y(516), "[2]");
  wave(p, p.x(982), p.y(376), "[3]");
  wave(p, p.x(1106), p.y(460), "[4]");
  wave(p, p.x(1397), p.y(49), "[5]");
  wave(p, p.x(1411), p.y(30), "1", true);
  wave(p, p.x(1556), p.y(341), "2", true);

  const ticks = levels.map((l, k) => [l, k < 2 ? String(k * 500) : (k / 2).toFixed(1) + "00"]);
  axis(p, ticks.concat([[215, "3.819,3", "#08d808", 1], [266, "3.220,1", "#a01010", 1], [364, "2.062,9", NAVY, 1]]));
}

// one value per quarter, from quarter -5
const trainFast = [89, 88, 88, 93, 95, 85, 73, 64, 64, 63, 49, 32, 14, 8, 5, 10, 26, 40, 51, 51, 50, 45, 39, 28, 15, 15, 17, 29, 31, 37, 51, 66, 79, 82, 82, 82, 84, 83, 75, 55, 35, 15, 12, 9, 18, 18, 20, 29, 45, 46, 39, 20, 16, 12, 11, 12, 12, 18, 39, 51, 65, 64, 74, 77, 75, 73, 68, 65, 58, 55, 43, 30, 14, 12, 8, 12, 12, 13, 15, 18, 18, 13, 8, 21, 34, 43, 40, 35, 31, 21, 19, 25, 35, 58, 71, 86, 87, 84, 73, 73, 85, 95, 92, 87, 82, 83, 83, 83, 87, 91, 86, 76, 66, 69, 77, 83, 89, 91, 87, 76, 70, 67, 69, 79, 81, 82, 83, 89, 96, 99, 98, 85, 72, 66, 62, 65, 65, 60, 37, 24, 13, 16, 15, 16, 14, 9, 12, 12, 12, 25, 51, 76, 73, 62, 52, 62, 69, 75, 73, 55, 48, 50, 70, 77, 85, 83, 83, 87, 85, 77, 64, 53, 55, 60, 58, 39, 31, 43, 62, 64, 66, 79, 91, 92, 91, 90, 93, 95, 95, 89, 79];
// from quarter 57
const trainSlow = [38, 38, 37, 37, 37, 37, 36, 35, 34, 33, 31, 29, 26, 23, 20, 16, 9, 6, 3, 2, 1, 4, 8, 10, 11, 11, 10, 7, 6, 9, 12, 15, 18, 24, 30, 32, 35, 40, 51, 62, 62, 63, 64, 69, 71, 75, 82, 91, 87, 80, 76, 79, 83, 89, 93, 93, 88, 83, 82, 82, 85, 89, 90, 90, 91, 95, 98, 99, 98, 92, 85, 82, 82, 86, 86, 85, 78, 69, 61, 62, 61, 62, 59, 56, 56, 54, 52, 54, 57, 62, 61, 59, 58, 59, 62, 63, 63, 60, 59, 60, 65, 69, 73, 77, 83, 87, 91, 87, 83, 82, 85, 87, 87, 83, 82, 85, 89, 89, 90, 93, 96, 97, 95, 96, 96, 97, 97, 92, 84];
const trainUps = [-3, 3, 10, 21, 30, 39, 50, 52, 57, 60, 70, 72, 74, 78, 86, 95, 100, 102, 108, 117, 130, 136, 138, 141, 144, 150, 156, 161, 163, 167, 172, 180, 182];
const trainDowns = [0, 4, 15, 29, 32, 45, 51, 56, 59, 61, 71, 73, 75, 81, 92, 97, 101, 105, 113, 125, 131, 137, 139, 143, 147, 153, 160, 162, 164, 169, 179, 181, 183];

function drawTrains() {
  const p = openPane("trains", 548, 98);
  const v = (n) => p.y(642.3 - n * 0.867);
  const end = p.q(185);
  grid(p, [590, 607]);
  p.rect(0, v(100), end, v(80) - v(100), "#d8f5d8");
  p.rect(0, v(20), end, v(0) - v(20), "#fddcdc");

  const slowSignal = trainSlow.map((n, k) => {
    const last = trainSlow.slice(Math.max(0, k - 4), k + 1);
    return last.reduce((a, b) => a + b) / last.length;
  });
  for (let k = 1; k < trainSlow.length; k++) {
    const a = p.q(56 + k);
    const b = p.q(57 + k);
    const s0 = trainSlow[k - 1];
    const s1 = trainSlow[k];
    if (s0 >= 80 && s1 >= 80) p.area([[a, v(s0)], [b, v(s1)], [b, v(80)], [a, v(80)]], "#208a20", 0.5);
    if (s0 <= 20 && s1 <= 20) p.area([[a, v(s0)], [b, v(s1)], [b, v(20)], [a, v(20)]], "#902a10", 0.45);
    p.area([[a, v(s0)], [b, v(s1)], [b, v(slowSignal[k])], [a, v(slowSignal[k - 1])]], s1 >= slowSignal[k] ? "#3030c0" : "#d040c8", 0.3);
  }
  const signal = trainFast.map((n, k) => (k ? n * 0.6 + trainFast[k - 1] * 0.4 : n));
  for (let k = 1; k < trainFast.length; k++) {
    const up = trainFast[k] >= trainFast[k - 1];
    p.area([[p.q(k - 6), v(trainFast[k - 1])], [p.q(k - 5), v(trainFast[k])], [p.q(k - 5), v(signal[k])], [p.q(k - 6), v(signal[k - 1])]], up ? "#60d060" : "#f06060", 0.35);
  }
  [100, 80, 0].forEach((n) => p.line(0, v(n), end, v(n), "#222"));
  p.line(0, v(20), end, v(20), "#444");
  p.line(0, v(50), end, v(50), "#2020b0", 1.500, "5 4");

  p.path(slowSignal.map((n, k) => [p.q(57 + k), v(n)]), "#111", 2.500, "4 4");
  for (let k = 1; k < trainSlow.length; k++)
    p.add("line", { x1: p.q(56 + k), y1: v(trainSlow[k - 1]), x2: p.q(57 + k), y2: v(trainSlow[k]), stroke: trainSlow[k] >= trainSlow[k - 1] ? NAVY : "#f00", "stroke-width": 3, "stroke-linecap": "round" });
  p.path(signal.map((n, k) => [p.q(k - 5), v(n)]), "#333", 1, "3 2");
  for (let k = 1; k < trainFast.length; k++)
    p.add("line", { x1: p.q(k - 6), y1: v(trainFast[k - 1]), x2: p.q(k - 5), y2: v(trainFast[k]), stroke: trainFast[k] >= trainFast[k - 1] ? "#000" : "#e81818", "stroke-width": 1.500 });
  trainUps.forEach((i) => triangle(p, i, v(trainFast[i + 5]), true, UP));
  trainDowns.forEach((i) => triangle(p, i, v(trainFast[i + 5]), false, DOWN));

  axis(p, [[553, "100", "#222", 1], [561, "92,245", "#222", 1], [571, "86,489", "#222", 1], [579, "79,271", "#d01010", 1], [590, "60"], [607, "40"], [599, "50", "#2020b0", 1], [625, "20", "#222", 1], [641, "0", "#222", 1]]);
}

// from quarter 19
const willy = [-72, -70, -70, -70, -70, -69, -68, -60, -62, -60, -57, -57, -54, -57, -62, -69, -70, -77, -84, -84, -77, -79, -81, -71, -66, -69, -64, -68, -69, -70, -73, -72, -78, -75, -58, -65, -51, -50, -51, -50, -55, -60, -62, -64, -65, -61, -68, -70, -75, -84, -94, -88, -95, -86, -87, -86, -91, -97, -97, -72, -77, -83, -78, -84, -86, -94, -88, -75, -82, -69, -64, -58, -43, -47, -45, -19, -2, -3, -20, -8, -9, -13, -11, -3, -9, -2, -22, -28, -18, -15, -16, -2, -2, -14, -14, -21, -19, -15, -13, -3, -13, -12, -1, 0, -1, -1, -5, -17, -21, -16, -20, -9, -13, -19, -42, -37, -47, -41, -38, -46, -47, -48, -49, -54, -61, -50, -44, -48, -58, -52, -52, -51, -49, -48, -54, -58, -57, -60, -51, -48, -46, -39, -16, -17, -18, -34, -29, -31, -23, -14, -28, -40, -25, -9, -15, -22, -6, 0, -8, -3, -10, -1, -8, 0, -6, -21, -20];
const willyBands = {
  "#fba4a4": [[21, 21], [27, 27], [30, 30], [32, 38], [40, 41], [44, 44], [46, 49], [51, 51], [54, 54], [57, 57], [60, 63], [65, 69], [71, 71], [73, 73], [75, 76], [79, 80], [82, 84], [87, 87], [143, 143], [149, 149], [154, 154], [156, 156]],
  "#65c065": [[58, 58], [91, 91], [144, 144], [151, 151], [158, 158]],
  "#c06464": [[59, 59], [142, 142], [147, 147], [153, 153]],
  "#c1c1fb": [[93, 95], [98, 98], [101, 102], [104, 104], [107, 108], [110, 110], [113, 113], [115, 118], [120, 122], [128, 128], [130, 130], [134, 134], [136, 137], [145, 145], [152, 152], [159, 161], [163, 163], [165, 165], [167, 168], [171, 172], [175, 176], [178, 178], [180, 180], [182, 182], [185, 185]],
};

function bands(p, ranges, color) {
  ranges.forEach(([a, b]) => p.rect(p.q(a - 0.5), 0, p.q(b + 0.5) - p.q(a - 0.5), p.H, color));
}

function drawWilly() {
  const p = openPane("willy", 647, 65);
  const v = (n) => p.y(652.3 - n * 0.577);
  const end = p.q(185);
  grid(p, []);
  for (const color in willyBands) bands(p, willyBands[color], color);
  const clamp = (f) => willy.map((n, k) => [p.q(19 + k), v(f(n))]);
  p.area([[p.q(19), v(-25)], ...clamp((n) => Math.max(n, -25)), [end, v(-25)]], "#20a040", 0.4);
  p.area([[p.q(19), v(-75)], ...clamp((n) => Math.min(n, -75)), [end, v(-75)]], "#8b0000", 0.4);
  p.line(0, v(0), end, v(0), "#111", 1, "4 3");
  p.line(0, v(-100), end, v(-100), "#333", 1, "4 3");
  p.line(0, v(-25), end, v(-25), "#101090", 1.500);
  p.line(0, v(-50), end, v(-50), "#2020a0", 1.500, "4 4");
  p.line(0, v(-75), end, v(-75), "#d01010", 1.500);
  for (let k = 1; k < willy.length; k++) {
    const a = willy[k - 1];
    const b = willy[k];
    let color = b > a ? "#0000c8" : "#f90";
    if (b > -25) color = "#00c800";
    if (b < -75) color = "#980000";
    p.add("line", { x1: p.q(18 + k), y1: v(a), x2: p.q(19 + k), y2: v(b), stroke: color, "stroke-width": 3, "stroke-linecap": "round" });
  }
  [57, 90, 143, 150, 157].forEach((i) => triangle(p, i, v(-51), true, UP, 5));
  [58, 141, 146, 152].forEach((i) => triangle(p, i, v(-49), false, DOWN, 5));
  axis(p, [[652, "0"], [663, "-19,980", "#10d010"], [670, "-25", NAVY, 1], [681, "-50", NAVY, 1], [695, "-75", "#d01010", 1], [707, "-100", "#222", 1]]);
}

const awesomeFast = spread([[19, -70], [20, -120], [24, -10], [28, 95], [32, 135], [36, 55], [41, -25], [46, 25], [52, -10], [54, 70], [64, 60], [68, 10], [74, -60], [80, -30], [84, -50], [88, 30], [92, 80], [96, 140], [101, 100], [104, 150], [108, 240], [112, 330], [116, 290], [119, 270], [122, 400], [126, 520], [127, 560], [130, 510], [131, 510], [132, 430], [133, 150], [134, -50], [135, -120], [138, -120], [140, -220], [143, -280], [145, -200], [147, -20], [149, 20], [152, 100], [155, 40], [158, 160], [161, 330], [163, 550], [165, 430], [168, 350], [171, 140], [173, 270], [175, 220], [178, 540], [181, 1050], [183, 1660], [184, 2070], [185, 2258]]);
const awesomeSlow = spread([[13, 95], [15, 95], [20, 20], [24, -20], [28, -15], [34, 55], [37, 10], [42, 0], [52, -20], [54, 10], [66, 5], [72, -55], [77, -55], [80, -30], [85, -55], [88, -10], [94, 40], [99, 80], [103, 110], [107, 230], [111, 240], [114, 365], [118, 380], [120, 400], [124, 550], [127, 720], [129, 740], [131, 710], [134, 510], [136, 280], [139, 150], [141, 60], [143, -55], [151, -55], [152, -40], [158, -55], [160, 50], [163, 360], [165, 480], [171, 380], [174, 340], [176, 420], [178, 580], [180, 780], [182, 1120], [184, 1700], [185, 1930]]);

function drawAwesome() {
  const p = openPane("awesome", 713, 71);
  const v = (n) => p.y(774.3 - n * 0.0245);
  grid(p, [725, 737, 750, 762]);
  for (let i = 104; i <= 185; i++) {
    const n = awesomeFast[i];
    const up = n >= awesomeFast[i - 1];
    const color = n < 0 ? (up ? "#00a" : "#f01010") : up ? "#0a0af0" : "#f0f";
    if (awesomeSlow[i] > n && i > 128 && i < 144) p.rect(p.q(i) - 2, v(awesomeSlow[i]), 5, v(n) - v(awesomeSlow[i]), "#fbe0dc");
    p.rect(p.q(i) - 2, Math.min(v(n), v(0)), 5, Math.abs(v(n) - v(0)), color);
  }
  p.line(0, v(0), p.q(185), v(0), "#1818f0", 1.500);
  const run = (data, from, up, down) => {
    for (let i = from + 1; i <= 185; i++)
      p.add("line", { x1: p.q(i - 1), y1: v(data[i - 1]), x2: p.q(i), y2: v(data[i]), stroke: data[i] >= data[i - 1] ? up : down, "stroke-width": i > 100 ? 3 : 2, "stroke-linecap": "round" });
  };
  run(awesomeFast, 19, "#000030", "#a800a8");
  run(awesomeSlow, 13, "#66f266", "#ff9010");
  [25, 53, 79, 103, 111, 146, 149, 178].forEach((i) => triangle(p, i, v(awesomeSlow[i]) - 1, true, "#10e8f8", 4));
  [35, 66, 101, 107, 114, 148, 165].forEach((i) => triangle(p, i, v(awesomeSlow[i]) - 1, false, "#f8f000", 4));
  axis(p, [[738, "1.500"], [749, "1.000"], [762, "500"], [718, "2.258,3", "#1818e0", 1], [726, "1.990,1", "#10c810", 1], [731, "1.960,1", "#50e050", 1], [769, "0", "#1818e0", 1], [778, "0", "#1818e0", 1]]);
}

const forceGreen = [[-5, 5], [10, 10], [26, 27], [29, 29], [32, 32], [40, 40], [42, 44], [53, 55], [68, 68], [71, 74], [78, 81], [85, 85], [89, 89], [91, 99], [102, 108], [110, 122], [125, 130], [133, 135], [144, 145], [147, 147], [157, 158], [160, 166], [168, 172], [175, 185]];

function drawForce() {
  const p = openPane("force", 785, 46);
  grid(p, [789]);
  p.rect(0, 0, p.q(185.5), p.H, "#fdfb86");
  bands(p, forceGreen, "#40fb40");
  p.line(0, p.y(809.5), p.q(185), p.y(809.5), "#111");
  axis(p, [[789, "0,505"], [809.5, "0,5000", "#222", 1], [827, "0,495"]]);
}

function drawTime() {
  const p = openPane("time", 831, 12);
  for (let i = 0; i <= 200; i += 8) {
    p.line(p.q(i), 0, p.q(i), 2, "#6f8792");
    label(p, p.q(i), 10, String(1980 + i / 4), "#222");
  }
}

function drawAll() {
  drawPrice();
  drawTrains();
  drawWilly();
  drawAwesome();
  drawForce();
  drawTime();
}

drawAll();
window.addEventListener("resize", drawAll);
```
